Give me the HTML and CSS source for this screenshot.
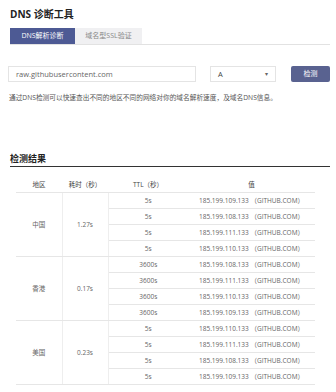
FILE: index.html
```html
<!DOCTYPE html>
<html lang="zh">
<head>
<meta charset="utf-8">
<link rel="stylesheet" href="styles.css">
</head>
<body>
<div class="page">
  <h1 class="title">DNS 诊断工具</h1>
  <div class="tabs">
    <div class="tab active">DNS解析诊断</div>
    <div class="tab">域名型SSL验证</div>
  </div>
  <div class="form">
    <div class="input">raw.githubusercontent.com</div>
    <div class="select"><span>A</span><span class="caret">▾</span></div>
    <div class="btn">检测</div>
  </div>
  <p class="desc">通过DNS检测可以快速查出不同的地区不同的网络对你的域名解析速度，及域名DNS信息。</p>
  <h2 class="section">检测结果</h2>
  <table class="result">
    <colgroup><col class="c1"><col class="c2"><col class="c3"><col class="c4"></colgroup>
    <thead>
      <tr><th>地区</th><th>耗时（秒）</th><th>TTL（秒）</th><th>值</th></tr>
    </thead>
    <tbody>
      <tr><td rowspan="4" class="grp">中国</td><td rowspan="4" class="grp">1.27s</td><td>5s</td><td>185.199.109.133 （GITHUB.COM）</td></tr>
      <tr><td>5s</td><td>185.199.108.133 （GITHUB.COM）</td></tr>
      <tr><td>5s</td><td>185.199.111.133 （GITHUB.COM）</td></tr>
      <tr><td>5s</td><td>185.199.110.133 （GITHUB.COM）</td></tr>
      <tr><td rowspan="4" class="grp">香港</td><td rowspan="4" class="grp">0.17s</td><td>3600s</td><td>185.199.108.133 （GITHUB.COM）</td></tr>
      <tr><td>3600s</td><td>185.199.111.133 （GITHUB.COM）</td></tr>
      <tr><td>3600s</td><td>185.199.110.133 （GITHUB.COM）</td></tr>
      <tr><td>3600s</td><td>185.199.109.133 （GITHUB.COM）</td></tr>
      <tr><td rowspan="4" class="grp">美国</td><td rowspan="4" class="grp">0.23s</td><td>5s</td><td>185.199.110.133 （GITHUB.COM）</td></tr>
      <tr><td>5s</td><td>185.199.111.133 （GITHUB.COM）</td></tr>
      <tr><td>5s</td><td>185.199.108.133 （GITHUB.COM）</td></tr>
      <tr><td>5s</td><td>185.199.109.133 （GITHUB.COM）</td></tr>
    </tbody>
  </table>
</div>
</body>
</html>
```
FILE: styles.css
```css
* { box-sizing: border-box; }
html, body { margin: 0; padding: 0; background: #fff; }
body {
  font-family: "Open Sans", "Noto Sans CJK SC", sans-serif;
  color: #333;
  width: 336px;
  height: 392px;
  overflow: hidden;
}
.page { padding: 7px 6px 0 10px; }
.title {
  margin: 0;
  font-size: 10px;
  font-weight: 700;
  line-height: 14px;
  color: #222;
}
.tabs {
  display: flex;
  margin-top: 7px;
  border-bottom: 1px solid #e2e2e2;
  width: 320px;
}
.tab {
  height: 16px;
  line-height: 16px;
  font-size: 7px;
  text-align: center;
  background: #f0f0f2;
  color: #888;
  width: 67px;
}
.tab.active {
  width: 65px;
  background: #4d5a94;
  color: #fff;
}
.form {
  display: flex;
  align-items: center;
  margin-top: 21px;
  margin-left: -2px;
}
.input {
  width: 188px;
  height: 16px;
  border: 1px solid #e4e4e4;
  font-size: 7.5px;
  line-height: 14px;
  padding-left: 7px;
  color: #666;
}
.select {
  margin-left: 14px;
  width: 66px;
  height: 16px;
  border: 1px solid #e4e4e4;
  font-size: 7.5px;
  line-height: 14px;
  padding: 0 7px;
  display: flex;
  justify-content: space-between;
  color: #444;
}
.caret { font-size: 6px; color: #666; }
.btn {
  margin-left: 15px;
  width: 39px;
  height: 16px;
  border-radius: 2px;
  background: #596290;
  color: #fff;
  font-size: 7px;
  line-height: 16px;
  text-align: center;
}
.desc {
  margin: 11px 0 0 -1px;
  font-size: 6.7px;
  line-height: 10px;
  color: #555;
}
.section {
  margin: 50px 0 0 0;
  font-size: 9px;
  font-weight: 700;
  line-height: 12px;
  color: #222;
  padding-bottom: 1px;
  border-bottom: 1.5px solid #333;
  width: 320px;
}
.result {
  margin: 9px 0 0 6px;
  border-collapse: collapse;
  table-layout: fixed;
  width: 299px;
  font-size: 6.5px;
  color: #666;
}
.c1 { width: 46px; }
.c2 { width: 46px; }
.c3 { width: 80px; }
.c4 { width: 127px; }
.result th {
  height: 16px;
  font-weight: 400;
  color: #444;
  border-bottom: 1px solid #e6e6e6;
  padding: 0;
}
.result td {
  height: 16px;
  padding: 0;
  text-align: center;
  border-bottom: 1px solid #e6e6e6;
}
.result td.grp {
  border-right: 1px solid #eee;
  color: #666;
}
```
